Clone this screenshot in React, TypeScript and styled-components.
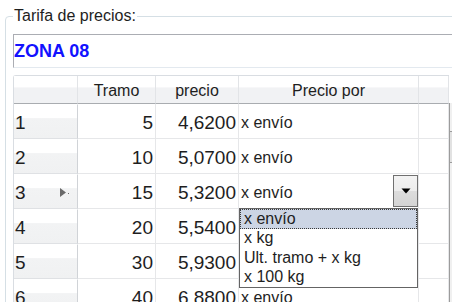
import React from 'react';
import styled, { createGlobalStyle } from 'styled-components';

const Global = createGlobalStyle`
  html, body { margin: 0; padding: 0; background: #fff; overflow: hidden; }
  body { font-family: "Liberation Sans", Arial, sans-serif; color: #1e1e1e; }
`;

const Viewport = styled.div`
  width: 452px;
  height: 302px;
  overflow: hidden;
  background: #fff;
  padding-top: 7px;
  box-sizing: border-box;
`;

const GroupBox = styled.fieldset`
  box-sizing: border-box;
  margin: 0 0 0 5px;
  padding: 9px 0 0 7px;
  width: 500px;
  height: 340px;
  border: 1px solid #d5dfe5;
  border-radius: 4px;
  min-width: 0;
`;

const Caption = styled.legend`
  padding: 0 1px;
  font-size: 16px;
  line-height: 18px;
  color: #1e1e1e;
`;

const ZoneField = styled.div`
  height: 34px;
  box-sizing: border-box;
  border-top: 1px solid #abadb3;
  border-left: 1px solid #abadb3;
  border-bottom: 1px solid #e3e9ef;
  display: flex;
  align-items: center;
  padding: 1px 0 0 0;
  font-weight: bold;
  font-size: 18px;
  color: #1212ff;
`;

const GridFrame = styled.div`
  margin-top: 7px;
  display: flex;
  align-items: flex-start;
`;

const Table = styled.div`
  display: grid;
  grid-template-columns: 64px 78px 83px 180px 30px;
  grid-template-rows: 28px;
  grid-auto-rows: 35px;
  border-left: 1px solid #d9dde2;
  border-top: 1px solid #d9dde2;
  border-top-left-radius: 3px;
  box-sizing: border-box;
`;

const HeadCell = styled.div`
  box-sizing: border-box;
  border-right: 1px solid #e2e4e7;
  border-bottom: 1px solid #a9acb0;
  background: linear-gradient(#ffffff 0%, #ffffff 42%, #f1f2f4 43%, #f1f2f4 100%);
  display: flex;
  align-items: center;
  justify-content: center;
  padding-top: 2px;
  font-size: 16px;
  color: #1e1e1e;
`;

const RowHead = styled.div`
  box-sizing: border-box;
  border-right: 1px solid #d0d3d7;
  border-bottom: 1px solid #dfe1e4;
  border-top: 1px solid #ffffff;
  background: linear-gradient(#ffffff 0%, #ffffff 40%, #f2f3f4 41%, #f0f1f2 100%);
  display: flex;
  align-items: center;
  padding: 3px 0 0 1px;
  font-size: 19px;
  color: #1e1e1e;
`;

const Cell = styled.div<{ $align?: 'left' | 'right' }>`
  position: relative;
  box-sizing: border-box;
  border-right: 1px solid #e6e7e9;
  border-bottom: 1px solid #e6e7e9;
  display: flex;
  align-items: center;
  justify-content: ${(p) => (p.$align === 'right' ? 'flex-end' : 'flex-start')};
  padding: 3px ${(p) => (p.$align === 'right' ? '2px' : '0')} 0 ${(p) => (p.$align === 'right' ? '0' : '2px')};
  font-size: ${(p) => (p.$align === 'right' ? '19px' : '16px')};
  color: #1e1e1e;
  white-space: nowrap;
`;

const ComboCell = styled(Cell)`
  padding-top: 0;
  padding-right: 0;
  z-index: 2;
`;

const ComboText = styled.span`
  padding-top: 3px;
  flex: 1;
`;

const ComboButton = styled.div`
  width: 25px;
  height: 32px;
  box-sizing: border-box;
  margin: 1px 0 1px 0;
  border: 1px solid #707070;
  background: linear-gradient(#f3f3f3 0%, #ececec 50%, #dcdcdc 51%, #d4d4d4 100%);
  display: flex;
  align-items: center;
  justify-content: center;
`;

const DropList = styled.div`
  position: absolute;
  top: 100%;
  left: 0;
  width: 179px;
  box-sizing: border-box;
  border: 1px solid #646464;
  background: #fff;
  z-index: 3;
`;

const DropItem = styled.div<{ $selected?: boolean }>`
  height: 19.5px;
  box-sizing: border-box;
  display: flex;
  align-items: center;
  padding-left: 4px;
  font-size: 16px;
  color: #1e1e1e;
  background: ${(p) => (p.$selected ? '#ccd5e4' : '#fff')};
  outline: ${(p) => (p.$selected ? '1px dotted #3a3a3a' : 'none')};
  outline-offset: -1px;
`;

const ScrollTrack = styled.div`
  width: 17px;
  margin-top: 28px;
  height: 220px;
  box-sizing: border-box;
  border-left: 1px solid #9c9c9c;
  background: #f0f0f0;
  display: flex;
  flex-direction: column;
`;

const ScrollThumb = styled.div`
  margin-top: 28px;
  height: 30px;
  border-top: 1px solid #9c9c9c;
  border-bottom: 1px solid #9c9c9c;
  background: #e2e2e2;
`;

const RowNum = styled.span`
  flex: 1;
`;

const CurrentMark = () => (
  <svg width="10" height="10" viewBox="0 0 10 10" style={{ marginRight: 7 }}>
    <polygon points="0,0 6,4.5 0,9" fill="#6a6a6a" />
    <rect x="8" y="5" width="1" height="1" fill="#6a6a6a" />
  </svg>
);

const DownArrow = () => (
  <svg width="10" height="6" viewBox="0 0 10 6">
    <polygon points="0.5,0.5 9.5,0.5 5,5.5" fill="#000" />
  </svg>
);

type Row = { n: number; tramo: number; precio: string; por: string };

const rows: Row[] = [
  { n: 1, tramo: 5, precio: '4,6200', por: 'x envío' },
  { n: 2, tramo: 10, precio: '5,0700', por: 'x envío' },
  { n: 3, tramo: 15, precio: '5,3200', por: 'x envío' },
  { n: 4, tramo: 20, precio: '5,5400', por: 'x envío' },
  { n: 5, tramo: 30, precio: '5,9300', por: 'x envío' },
  { n: 6, tramo: 40, precio: '6,8800', por: 'x envío' },
];

const options = ['x envío', 'x kg', 'Ult. tramo + x kg', 'x 100 kg'];

export default function App() {
  return (
    <>
      <Global />
      <Viewport>
        <GroupBox>
          <Caption>Tarifa de precios:</Caption>
          <ZoneField>ZONA 08</ZoneField>
          <GridFrame>
            <Table>
              <HeadCell />
              <HeadCell>Tramo</HeadCell>
              <HeadCell>precio</HeadCell>
              <HeadCell>Precio por</HeadCell>
              <HeadCell />
              {rows.map((r) => {
                const current = r.n === 3;
                return (
                  <React.Fragment key={r.n}>
                    <RowHead>
                      <RowNum>{r.n}</RowNum>
                      {current && <CurrentMark />}
                    </RowHead>
                    <Cell $align="right">{r.tramo}</Cell>
                    <Cell $align="right">{r.precio}</Cell>
                    {current ? (
                      <ComboCell>
                        <ComboText>{r.por}</ComboText>
                        <ComboButton>
                          <DownArrow />
                        </ComboButton>
                        <DropList>
                          {options.map((o, i) => (
                            <DropItem key={o} $selected={i === 0}>
                              {o}
                            </DropItem>
                          ))}
                        </DropList>
                      </ComboCell>
                    ) : (
                      <Cell>{r.por}</Cell>
                    )}
                    <Cell />
                  </React.Fragment>
                );
              })}
            </Table>
            <ScrollTrack>
              <ScrollThumb />
            </ScrollTrack>
          </GridFrame>
        </GroupBox>
      </Viewport>
    </>
  );
}
